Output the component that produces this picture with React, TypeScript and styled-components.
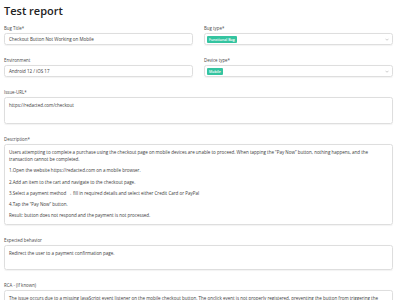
import React from "react";
import styled, { createGlobalStyle } from "styled-components";

const GlobalStyle = createGlobalStyle`
  html, body {
    margin: 0;
    padding: 0;
    background: #ffffff;
    overflow: hidden;
  }
  body {
    font-family: "Open Sans", "Noto Sans", Arial, sans-serif;
    color: #333333;
  }
`;

const Page = styled.div`
  padding: 3px 7px 0 4px;
`;

const Title = styled.h1`
  margin: 0 0 7px;
  font-size: 11px;
  line-height: 15px;
  font-weight: 600;
  color: #222222;
`;

const Grid = styled.div`
  display: grid;
  grid-template-columns: 1fr 1fr;
  column-gap: 11px;
  row-gap: 12px;
`;

const Stack = styled.div`
  display: flex;
  flex-direction: column;
  gap: 12px;
  margin-top: 12px;
`;

const Field = styled.div`
  display: flex;
  flex-direction: column;
  gap: 2px;
  min-width: 0;
`;

const Label = styled.label`
  font-size: 4.4px;
  line-height: 6px;
  color: #474747;
`;

const Input = styled.div`
  height: 12px;
  box-sizing: border-box;
  display: flex;
  align-items: center;
  padding: 0 4px;
  border: 0.5px solid #dedede;
  border-radius: 2.5px;
  box-shadow: 0 0.5px 1px rgba(0, 0, 0, 0.05);
  font-size: 4.5px;
  color: #3a3a3a;
  white-space: nowrap;
`;

const Select = styled(Input)`
  padding: 0 3px 0 2px;
  justify-content: space-between;
`;

const Badge = styled.span`
  display: inline-block;
  padding: 0 2px;
  height: 7px;
  line-height: 7px;
  border-radius: 1px;
  background: #34c4a0;
  color: #ffffff;
  font-size: 3.6px;
  font-weight: 600;
`;

const Chevron = () => (
  <svg width="4" height="3" viewBox="0 0 8 5">
    <polyline points="1,1 4,4 7,1" fill="none" stroke="#9a9a9a" strokeWidth="1" />
  </svg>
);

const Area = styled.div<{ $min?: number }>`
  box-sizing: border-box;
  min-height: ${(p) => p.$min ?? 26}px;
  padding: 4px 4px 4.5px;
  border: 0.5px solid #dedede;
  border-radius: 2.5px;
  box-shadow: 0 0.5px 1px rgba(0, 0, 0, 0.05);
  font-size: 4.5px;
  line-height: 7px;
  color: #3a3a3a;

  & > p {
    margin: 0 0 4.3px;
  }
  & > p:last-child {
    margin-bottom: 0;
  }
`;

const descriptionLines = [
  "Users attempting to complete a purchase using the checkout page on mobile devices are unable to proceed. When tapping the \u201cPay Now\u201d button, nothing happens, and the transaction cannot be completed.",
  "1.Open the website https://redacted.com on a mobile browser.",
  "2.Add an item to the cart and navigate to the checkout page.",
  "3.Select a payment method \u2192 fill in required details and select either Credit Card or PayPal",
  "4.Tap the \u201cPay Now\u201d button.",
  "Result: button does not respond and the payment is not processed.",
];

export default function App() {
  return (
    <Page>
      <GlobalStyle />
      <Title>Test report</Title>
      <Grid>
        <Field>
          <Label>Bug Title*</Label>
          <Input>Checkout Button Not Working on Mobile</Input>
        </Field>
        <Field>
          <Label>Bug type*</Label>
          <Select>
            <Badge>Functional Bug</Badge>
            <Chevron />
          </Select>
        </Field>
        <Field>
          <Label>Environment</Label>
          <Input>Android 12 / iOS 17</Input>
        </Field>
        <Field>
          <Label>Device type*</Label>
          <Select>
            <Badge>Mobile</Badge>
            <Chevron />
          </Select>
        </Field>
      </Grid>
      <Stack>
        <Field>
          <Label>Issue-URL*</Label>
          <Area $min={27}>https://redacted.com/checkout</Area>
        </Field>
        <Field>
          <Label>Description*</Label>
          <Area>
            {descriptionLines.map((line, i) => (
              <p key={`desc-${i}`}>{line}</p>
            ))}
          </Area>
        </Field>
        <Field>
          <Label>Expected behavior</Label>
          <Area $min={25}>Redirect the user to a payment confirmation page.</Area>
        </Field>
        <Field>
          <Label>RCA - (If known)</Label>
          <Area>
            The issue occurs due to a missing JavaScript event listener on the mobile checkout button. The onclick
            event is not properly registered, preventing the button from triggering the payment process.
          </Area>
        </Field>
      </Stack>
    </Page>
  );
}
